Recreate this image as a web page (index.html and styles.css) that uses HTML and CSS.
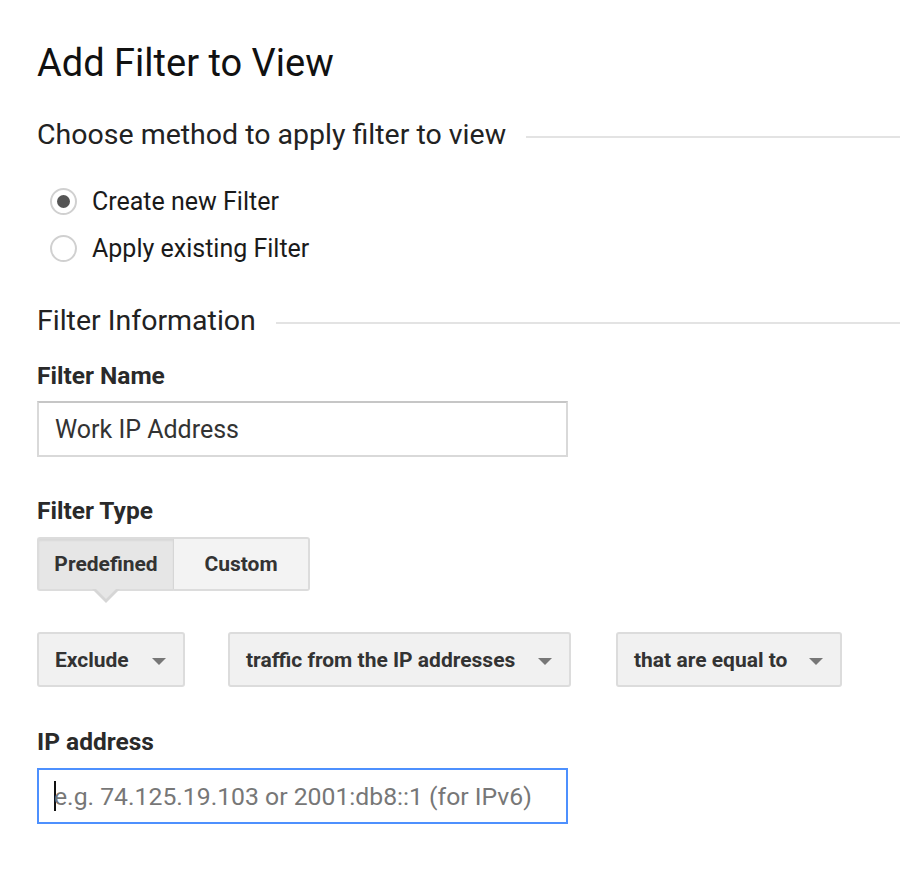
FILE: index.html
```html
<!DOCTYPE html>
<html>
<head>
<meta charset="utf-8">
<link rel="stylesheet" href="styles.css">
</head>
<body>
<div class="page">
  <h1 class="title">Add Filter to View</h1>

  <div class="section-head">
    <span class="section-label">Choose method to apply filter to view</span>
    <span class="section-rule"></span>
  </div>

  <div class="radios">
    <label class="radio-row"><span class="radio checked"></span><span class="radio-text">Create new Filter</span></label>
    <label class="radio-row"><span class="radio"></span><span class="radio-text">Apply existing Filter</span></label>
  </div>

  <div class="section-head info-head">
    <span class="section-label">Filter Information</span>
    <span class="section-rule"></span>
  </div>

  <div class="field-label name-label">Filter Name</div>
  <div class="text-input"><span class="value">Work IP Address</span></div>

  <div class="field-label type-label">Filter Type</div>
  <div class="seg">
    <div class="seg-btn active">Predefined<span class="pointer"></span></div>
    <div class="seg-btn">Custom</div>
  </div>

  <div class="selects">
    <div class="select sel-1"><span>Exclude</span><span class="caret"></span></div>
    <div class="select sel-2"><span>traffic from the IP addresses</span><span class="caret"></span></div>
    <div class="select sel-3"><span>that are equal to</span><span class="caret"></span></div>
  </div>

  <div class="field-label ip-label">IP address</div>
  <div class="text-input focused"><span class="cursor"></span><span class="placeholder">e.g. 74.125.19.103 or 2001:db8::1 (for IPv6)</span></div>
</div>
</body>
</html>
```

FILE: styles.css
```css
html, body {
  margin: 0;
  padding: 0;
  background: #ffffff;
}
body {
  font-family: Roboto, "Liberation Sans", sans-serif;
  color: #222;
}
.page {
  padding: 40px 0 0 37px;
}
.title {
  margin: 0;
  font-size: 38px;
  font-weight: 400;
  line-height: 46px;
  color: #111;
}
.section-head {
  display: flex;
  align-items: center;
  margin-top: 28px;
  height: 40px;
}
.section-label {
  font-size: 28.5px;
  color: #222;
  white-space: nowrap;
}
.section-rule {
  flex: 1;
  height: 2px;
  background: #e3e3e3;
  margin-left: 20px;
  margin-top: 6px;
}
.radios {
  margin-top: 34px;
  display: flex;
  flex-direction: column;
  gap: 21px;
}
.radio-row {
  display: flex;
  align-items: center;
  height: 26px;
}
.radio {
  box-sizing: border-box;
  width: 27px;
  height: 27px;
  border: 2px solid #d0d0d0;
  border-radius: 50%;
  margin-left: 13px;
  margin-right: 15px;
  display: flex;
  align-items: center;
  justify-content: center;
  background: #fff;
}
.radio.checked::after {
  content: "";
  width: 13px;
  height: 13px;
  border-radius: 50%;
  background: #555;
}
.radio-text {
  font-size: 25px;
  color: #1a1a1a;
}
.info-head {
  margin-top: 39px;
}
.field-label {
  font-size: 24.5px;
  line-height: 30px;
  font-weight: 700;
  color: #2a2a2a;
}
.name-label {
  margin-top: 21px;
}
.text-input {
  box-sizing: border-box;
  width: 531px;
  height: 56px;
  border: 2px solid #d9d9d9;
  border-top-color: #c6c6c6;
  display: flex;
  align-items: center;
  padding-left: 16px;
  margin-top: 10px;
  font-size: 25px;
}
.value {
  color: #333;
}
.type-label {
  margin-top: 39px;
}
.seg {
  display: flex;
  margin-top: 11px;
  width: 273px;
  height: 54px;
  box-sizing: border-box;
}
.seg-btn {
  position: relative;
  flex: 1;
  display: flex;
  align-items: center;
  justify-content: center;
  font-size: 21px;
  font-weight: 700;
  color: #333;
  background: #f3f3f3;
  border: 2px solid #dcdcdc;
  border-left: none;
  border-radius: 0 3px 3px 0;
}
.seg-btn.active {
  background: #e6e6e6;
  border-left: 2px solid #dcdcdc;
  border-radius: 3px 0 0 3px;
  border-right: 1px solid #d6d6d6;
  box-shadow: inset 0 2px 2px rgba(0,0,0,0.06);
}
.pointer {
  position: absolute;
  left: 50%;
  bottom: -14px;
  margin-left: -14px;
  width: 0;
  height: 0;
  border-left: 14px solid transparent;
  border-right: 14px solid transparent;
  border-top: 14px solid #d6d6d6;
}
.pointer::after {
  content: "";
  position: absolute;
  left: -12px;
  top: -16px;
  border-left: 12px solid transparent;
  border-right: 12px solid transparent;
  border-top: 12px solid #e6e6e6;
}
.selects {
  display: flex;
  margin-top: 41px;
}
.select {
  box-sizing: border-box;
  height: 55px;
  display: flex;
  align-items: center;
  justify-content: space-between;
  padding: 0 17px 0 16px;
  background: #f1f1f1;
  border: 2px solid #dcdcdc;
  border-radius: 3px;
  font-size: 21px;
  font-weight: 700;
  color: #333;
}
.sel-1 { width: 148px; }
.sel-2 { width: 343px; margin-left: 43px; }
.sel-3 { width: 226px; margin-left: 45px; }
.caret {
  width: 0;
  height: 0;
  border-left: 7px solid transparent;
  border-right: 7px solid transparent;
  border-top: 7px solid #777;
  margin-top: 3px;
}
.ip-label {
  margin-top: 40px;
}
.text-input.focused {
  border: 2px solid #4d90fe;
  padding-left: 15px;
  margin-top: 11px;
  font-size: 24.75px;
}
.cursor {
  width: 2px;
  height: 30px;
  background: #111;
  margin-right: -2px;
}
.placeholder {
  color: #777;
}
```
